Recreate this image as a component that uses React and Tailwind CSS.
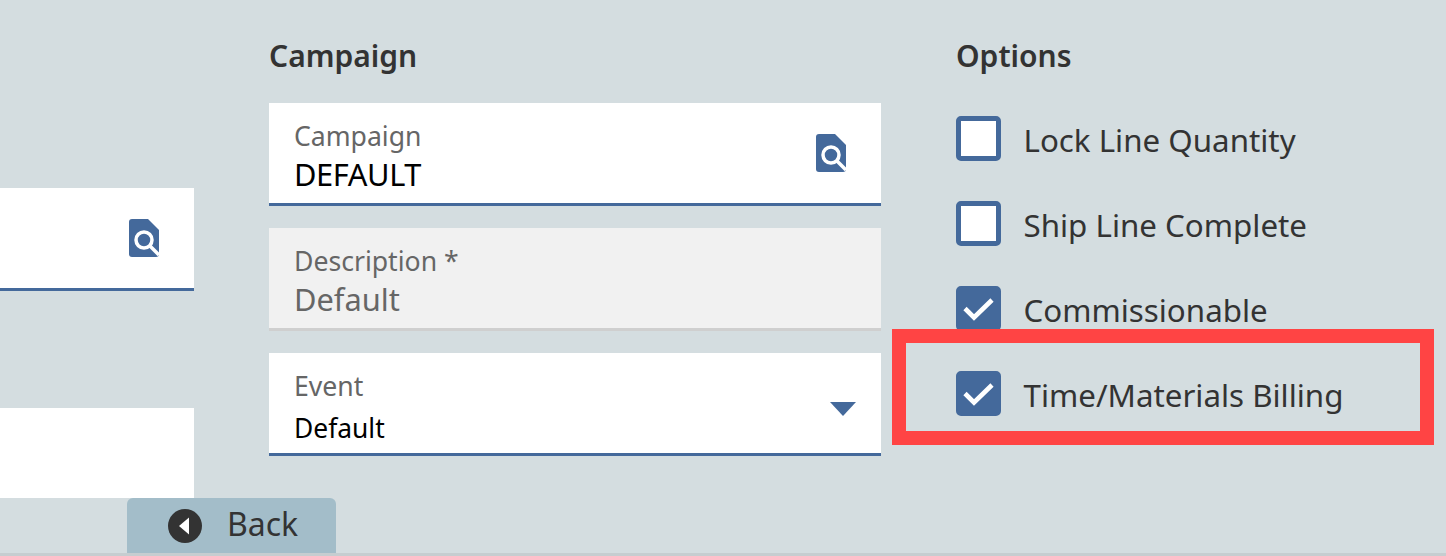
import React from 'react';

const BLUE = '#44699b';

const LookupIcon = () => (
  <svg width="30" height="38" viewBox="0 0 30 38" className="block">
    <path d="M3 0h16l11 11v24a3 3 0 0 1-3 3H3a3 3 0 0 1-3-3V3a3 3 0 0 1 3-3z" fill="#44699b" />
    <circle cx="15" cy="21" r="8" fill="none" stroke="white" strokeWidth="3.5" />
    <path d="M20.5 26.5l9.5 9.5" stroke="white" strokeWidth="3.5" fill="none" />
  </svg>
);

const Field = ({ label, value, icon, disabled, valueClass, topClass = 'pt-[4px]' }) => (
  <div
    className={`flex h-[103px] items-center justify-between border-b-[3px] pl-[25px] pr-[35px] ${
      disabled ? 'border-[#cfcfcf] bg-[#f1f1f1]' : 'border-[#44699b] bg-white'
    }`}
  >
    <div className={`flex flex-col ${topClass}`}>
      <span className="text-[26.6px] leading-[38px] text-[#666666]">{label}</span>
      <span className={`leading-[38px] ${valueClass} ${disabled ? 'text-[#666666]' : 'text-black'}`}>{value}</span>
    </div>
    {icon}
  </div>
);

const Option = ({ label, checked }) => (
  <div className="flex h-[45px] items-center gap-[22.5px]">
    <div
      className={`flex h-[45px] w-[45px] items-center justify-center rounded-[5px] border-[5px] border-[#44699b] ${
        checked ? 'bg-[#44699b]' : 'bg-white'
      }`}
    >
      {checked && (
        <svg width="31" height="24" viewBox="0 0 31 24" className="shrink-0">
          <path d="M2 11.5l9 9L29 3" fill="none" stroke="white" strokeWidth="4.6" />
        </svg>
      )}
    </div>
    <span className="pt-[3px] text-[31.3px] text-[#333333]">{label}</span>
  </div>
);

export default function App() {
  return (
    <div
      className="relative flex h-[556px] w-[1446px] flex-col overflow-hidden bg-[#d4dde0]"
      style={{ fontFamily: '"Noto Sans", sans-serif' }}
    >
      <div className="flex h-[498px] overflow-hidden">
        {/* cut-off left column */}
        <div className="w-[194px] shrink-0 pt-[188px]">
          <div className="flex h-[103px] items-center justify-end border-b-[3px] border-[#44699b] bg-white pr-[35px]">
            <LookupIcon />
          </div>
          <div className="mt-[117px] h-[103px] bg-white" />
        </div>

        <div className="ml-[75px] w-[612px] shrink-0 pt-[33px]">
          <h2 className="h-[70px] text-[30px] leading-[45px] font-semibold text-[#333333]">Campaign</h2>
          <div className="flex flex-col gap-[22px]">
            <Field
              label="Campaign"
              value="DEFAULT"
              valueClass="text-[30.8px] tracking-[-0.4px]"
              icon={<LookupIcon />}
            />
            <Field label="Description *" value="Default" valueClass="text-[30.8px]" disabled />
            <Field
              label="Event"
              value="Default"
              topClass="pt-[8px]"
              valueClass="pt-[4px] text-[26.4px]"
              icon={
                <svg width="26" height="14" viewBox="0 0 26 14" className="mr-[-10px] mt-[11px]">
                  <path d="M0 0h26L13 14z" fill={BLUE} />
                </svg>
              }
            />
          </div>
        </div>

        <div className="ml-[75px] flex-1 pt-[33px]">
          <h2 className="h-[83px] text-[30px] leading-[45px] font-semibold text-[#333333]">Options</h2>
          <div className="flex flex-col gap-[40px]">
            <Option label="Lock Line Quantity" />
            <Option label="Ship Line Complete" />
            <Option label="Commissionable" checked />
            <Option label="Time/Materials Billing" checked />
          </div>
        </div>
      </div>

      <div className="h-[58px] border-b-[3px] border-[#c6cdd0]">
        <button className="ml-[127px] flex h-[55px] w-[209px] items-center gap-[25px] rounded-t-[6px] bg-[#a3bdc9] pb-[3px] pl-[41px] text-[32px] text-[#333333]">
          <svg width="34" height="34" viewBox="0 0 34 34" className="mt-[3px]">
            <circle cx="17" cy="17" r="17" fill="#333333" />
            <path d="M21 8.5v17l-10-8.5z" fill="white" />
          </svg>
          Back
        </button>
      </div>

      {/* red annotation box */}
      <div className="absolute left-[892px] top-[329px] h-[116px] w-[542px] border-[14px] border-[#ff4444]" />
    </div>
  );
}
